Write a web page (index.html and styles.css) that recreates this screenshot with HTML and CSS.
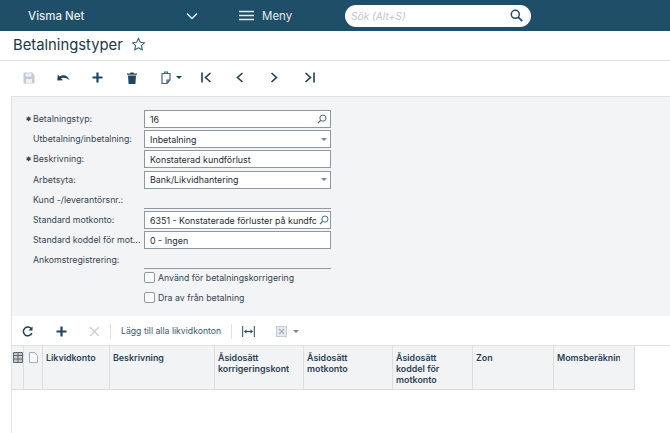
FILE: index.html
```html
<!DOCTYPE html>
<html lang="sv">
<head>
<meta charset="utf-8">
<title>Betalningstyper</title>
<link rel="stylesheet" href="styles.css">
</head>
<body>
<header class="topbar">
  <span class="brand">Visma Net</span>
  <svg class="chev" width="12" height="8" viewBox="0 0 12 8"><path d="M1 1.500l5 5 5-5" fill="none" stroke="#e4e9ec" stroke-width="1.500"/></svg>
  <svg class="burger" width="15" height="11" viewBox="0 0 15 11"><path d="M0 1.500h15M0 5.500h15M0 9.500h15" stroke="#e4e9ec" stroke-width="1.600"/></svg>
  <span class="menu">Meny</span>
  <div class="search">
    <span class="search-ph">Sök (Alt+S)</span>
    <svg width="13" height="13" viewBox="0 0 13 13"><circle cx="5.300" cy="5.300" r="4" fill="none" stroke="#1f4e69" stroke-width="1.500"/><path d="M8.200 8.200l4 4" stroke="#1f4e69" stroke-width="1.800"/></svg>
  </div>
</header>
<div class="titlebar">
  <h1>Betalningstyper</h1>
  <svg width="15" height="15" viewBox="0 0 15 15"><path d="M7.500 1.300l1.800 4 4.300.4-3.200 2.900.9 4.300-3.800-2.200-3.800 2.200.9-4.300L1.400 5.700l4.300-.4z" fill="none" stroke="#3c6079" stroke-width="1.100" stroke-linejoin="round"/></svg>
</div>
<nav class="toolbar">
  <svg class="t-save" width="12" height="12" viewBox="0 0 12 12"><path d="M0.500 1.500a1 1 0 0 1 1-1h7.500l2.500 2.500v7.500a1 1 0 0 1-1 1h-9a1 1 0 0 1-1-1z" fill="#c3ccd2"/><rect x="2.500" y="1.500" width="6" height="3" fill="#eef0f2"/><rect x="3" y="7" width="6" height="4" fill="#eef0f2"/></svg>
  <svg class="t-undo" width="13" height="9" viewBox="0 0 13 9"><path d="M0.300 7.500L0.800 1.500l1.900 1.900C6 1.200 10.500 1.800 12.800 7.500 10.200 4.800 7 4.300 4 5.200l2 2z" fill="#1f3f55"/></svg>
  <svg class="t-add" width="11" height="11" viewBox="0 0 11 11"><path d="M5.500 0.500v10M0.500 5.500h10" stroke="#1f4560" stroke-width="2.200"/></svg>
  <svg class="t-del" width="10" height="12" viewBox="0 0 10 12"><path d="M0 1.500h3.300V.4h3.400v1.100H10v1.300H0zM1 3.500h8l-.6 8.500H1.600z" fill="#1f4560"/></svg>
  <svg class="t-doc" width="10" height="13" viewBox="0 0 10 13"><path d="M1 2.500h8v6.500l-3 3.500H1z M3.500 2.500v-1.500h3v1.500 M6 12.500v-3.500h3" fill="none" stroke="#44647a" stroke-width="1.200"/></svg>
  <span class="caret t-caret"></span>
  <svg class="t-first" width="11" height="11" viewBox="0 0 11 11"><path d="M1 0.500v10" stroke="#1f3f55" stroke-width="1.600"/><path d="M9.500 1L4.500 5.500l5 4.500" fill="none" stroke="#1f3f55" stroke-width="1.600"/></svg>
  <svg class="t-prev" width="8" height="11" viewBox="0 0 8 11"><path d="M6.500 1L1.500 5.500l5 4.500" fill="none" stroke="#1f3f55" stroke-width="1.600"/></svg>
  <svg class="t-next" width="8" height="11" viewBox="0 0 8 11"><path d="M1.500 1l5 4.500-5 4.500" fill="none" stroke="#1f3f55" stroke-width="1.600"/></svg>
  <svg class="t-last" width="11" height="11" viewBox="0 0 11 11"><path d="M1.500 1l5 4.500-5 4.500" fill="none" stroke="#1f3f55" stroke-width="1.600"/><path d="M10 0.500v10" stroke="#1f3f55" stroke-width="1.600"/></svg>
</nav>
<section class="form">
  <div class="row"><label class="req">Betalningstyp:</label>
    <div class="field"><span class="val">16</span><svg class="lens" width="10" height="10" viewBox="0 0 11 11"><circle cx="6.500" cy="4.500" r="3.400" fill="none" stroke="#3c5a6e" stroke-width="1"/><path d="M4 7L1 10" stroke="#3c5a6e" stroke-width="1.300"/></svg></div></div>
  <div class="row"><label>Utbetalning/inbetalning:</label>
    <div class="field"><span class="val">Inbetalning</span><span class="caret grey"></span></div></div>
  <div class="row"><label class="req">Beskrivning:</label>
    <div class="field"><span class="val">Konstaterad kundförlust</span></div></div>
  <div class="row"><label>Arbetsyta:</label>
    <div class="field"><span class="val">Bank/Likvidhantering</span><span class="caret grey"></span></div></div>
  <div class="row"><label>Kund -/leverantörsnr.:</label>
    <div class="field line"></div></div>
  <div class="row"><label>Standard motkonto:</label>
    <div class="field"><span class="val">6351 - Konstaterade förluster på kundfc</span><svg class="lens" width="10" height="10" viewBox="0 0 11 11"><circle cx="6.500" cy="4.500" r="3.400" fill="none" stroke="#3c5a6e" stroke-width="1"/><path d="M4 7L1 10" stroke="#3c5a6e" stroke-width="1.300"/></svg></div></div>
  <div class="row"><label>Standard koddel för mot...</label>
    <div class="field"><span class="val">0 - Ingen</span></div></div>
  <div class="row"><label>Ankomstregistrering:</label>
    <div class="field line"></div></div>
  <div class="check first"><span class="box"></span>Använd för betalningskorrigering</div>
  <div class="check"><span class="box"></span>Dra av från betalning</div>
</section>
<nav class="gridbar">
  <svg class="g-ref" width="11" height="11" viewBox="0 0 11 11"><path d="M9.600 3.200A4.400 4.400 0 1 0 9.900 7" fill="none" stroke="#1f3f55" stroke-width="1.500"/><path d="M10.500 .5v4h-4z" fill="#1f3f55"/></svg>
  <svg class="g-add" width="11" height="11" viewBox="0 0 11 11"><path d="M5.500 0.500v10M0.500 5.500h10" stroke="#1f4560" stroke-width="2.200"/></svg>
  <svg class="g-x" width="11" height="11" viewBox="0 0 11 11"><path d="M1 1l9 9M10 1l-9 9" stroke="#c9d0d5" stroke-width="1.400"/></svg>
  <span class="sep s1"></span>
  <span class="g-text">Lägg till alla likvidkonton</span>
  <span class="sep s2"></span>
  <svg class="g-fit" width="13" height="11" viewBox="0 0 13 11"><path d="M.7 0v11M12.300 0v11" stroke="#2a4a60" stroke-width="1"/><path d="M2.500 5.500h8" stroke="#2a4a60" stroke-width="1.200"/><path d="M2 5.500l2.500-2v4zM11 5.500l-2.500-2v4z" fill="#2a4a60"/></svg>
  <svg class="g-xl" width="11" height="11" viewBox="0 0 11 11"><rect x=".5" y=".5" width="10" height="10" fill="#e6eaed" stroke="#c5cdd3"/><path d="M3 3l5 5M8 3L3 8" stroke="#a9b5bd" stroke-width="1.300"/></svg>
  <span class="caret grey g-caret"></span>
</nav>
<section class="grid">
  <div class="gh">
    <div class="cell c-i1"><svg width="10" height="11" viewBox="0 0 10 11"><path d="M.5.500h9v10h-9z" fill="#c9cdd1" stroke="#5c6870"/><path d="M.5 3.500h9M.5 7h9M5 .5v10" stroke="#5c6870"/></svg></div>
    <div class="cell c-i2"><svg width="9" height="11" viewBox="0 0 9 11"><path d="M.5.500h5l3 3v7h-8z" fill="#f8f9fa" stroke="#a4adb4"/></svg></div>
    <div class="cell c-1"><span class="txt">Likvidkonto</span></div>
    <div class="cell c-2"><span class="txt">Beskrivning</span></div>
    <div class="cell c-3"><span class="txt">Åsidosätt korrigeringskonto</span></div>
    <div class="cell c-4"><span class="txt">Åsidosätt motkonto</span></div>
    <div class="cell c-5"><span class="txt">Åsidosätt koddel för motkonto</span></div>
    <div class="cell c-6"><span class="txt">Zon</span></div>
    <div class="cell c-7"><span class="txt">Momsberäkning</span></div>
  </div>
</section>
</body>
</html>
```
FILE: styles.css
```css
* { box-sizing: border-box; }
html, body { margin: 0; padding: 0; }
body { width: 670px; height: 433px; overflow: hidden; background: #fff; font-family: Inter, "Liberation Sans", sans-serif; color: #2b3a45; }
svg { display: block; flex: none; }

.topbar { height: 31px; background: #1f4e69; display: flex; align-items: center; color: #e4e9ec; }
.brand { margin-left: 28px; width: 158px; font-size: 11.500px; font-weight: 500; }
.chev { margin-right: 41px; }
.burger { margin-right: 8px; }
.menu { font-size: 11.500px; width: 83px; }
.search { width: 186px; height: 22px; border-radius: 11px; background: #fff; display: flex; align-items: center; justify-content: space-between; padding: 0 8px 0 6px; }
.search-ph { font-size: 10.200px; font-style: italic; color: #c2c5c8; }

.titlebar { height: 30px; display: flex; align-items: center; gap: 8px; padding: 0 0 2px 13px; border-bottom: 1px solid #dfe2e5; }
h1 { margin: 0; font-size: 14.800px; font-weight: 400; color: #203746; }

.toolbar { height: 35px; display: flex; align-items: center; padding-bottom: 2px; }
.t-save { margin-left: 23px; }
.t-undo { margin-left: 22px; }
.t-add { margin-left: 22px; }
.t-del { margin-left: 24px; }
.t-doc { margin-left: 24px; }
.t-caret { margin-left: 5px; border-top-color: #44647a; }
.t-first { margin-left: 19px; }
.t-prev { margin-left: 24px; }
.t-next { margin-left: 26px; }
.t-last { margin-left: 26px; }

.caret { width: 0; height: 0; border: 3px solid transparent; border-top: 3px solid #1f3f55; border-bottom-width: 0; flex: none; }
.caret.grey { border-top-color: #7a8791; border-left-width: 3.500px; border-right-width: 3.500px; }

.form { height: 220px; margin-left: 11px; background: #f3f4f6; border: 1px solid #dfe2e5; border-width: 1px 0 0 1px; padding-top: 12px; }
.row { height: 20.200px; display: flex; align-items: center; }
.row label { width: 132px; padding-left: 21px; font-size: 8.750px; color: #33444f; position: relative; white-space: nowrap; }
.row label.req::before { content: "✱"; position: absolute; left: 14px; top: 1px; font-size: 6px; font-weight: 700; color: #33444f; }
.field { width: 187px; height: 18px; background: #fff; border: 1px solid #8f98a0; display: flex; align-items: center; justify-content: space-between; padding: 0 3px 0 5px; }
.val { font-size: 8.900px; white-space: nowrap; color: #1f2b33; }
.lens { margin-left: 2px; }
.field.line { background: transparent; border-width: 0 0 1px; }
.check { display: flex; align-items: center; margin-left: 132px; height: 20px; font-size: 8.750px; color: #33444f; }
.check.first { margin-top: -3px; }
.box { width: 11px; height: 11px; background: #fff; border: 1px solid #8f98a0; border-radius: 2px; margin-right: 3px; }

.gridbar { height: 30px; margin-left: 11px; border-left: 1px solid #dfe2e5; display: flex; align-items: center; border-bottom: 1px solid #dfe2e5; padding-top: 1px; }
.g-ref { margin-left: 10px; }
.g-add { margin-left: 23px; }
.g-x { margin-left: 22px; }
.sep { width: 1px; height: 15px; background: #dfe2e5; }
.s1 { margin-left: 10px; }
.g-text { margin-left: 10px; font-size: 8.700px; color: #3c5a6e; white-space: nowrap; }
.s2 { margin-left: 10px; }
.g-fit { margin-left: 10px; }
.g-xl { margin-left: 21px; }
.g-caret { margin-left: 6px; }

.grid { margin-left: 11px; border-left: 1px solid #dfe2e5; height: 87px; }
.gh { display: flex; height: 44px; width: 623px; background: #f2f3f5; border-bottom: 1px solid #d9dcdf; border-right: 1px solid #d9dcdf; }
.cell { flex: none; height: 100%; border-right: 1px solid #dcdfe2; padding: 6px 14px 0 3px; font-size: 8.900px; line-height: 11.200px; font-weight: 600; color: #2b4254; }
.txt { display: block; overflow: hidden; }
.c-i1 { width: 12px; padding: 6px 1px; }
.c-i2 { width: 19px; padding: 6px 5px; }
.c-1 { width: 67px; padding-right: 3px; }
.c-2 { width: 105px; }
.c-3 { width: 89px; }
.c-4 { width: 89px; }
.c-5 { width: 80px; }
.c-6 { width: 81px; }
.c-7 { width: 80px; border-right: 0; }
```
